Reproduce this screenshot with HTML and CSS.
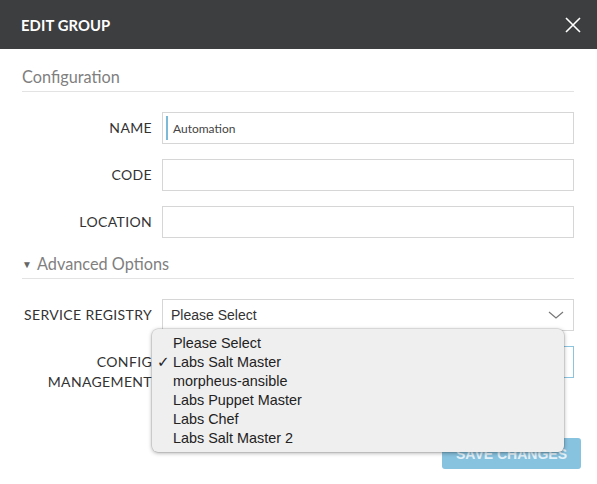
FILE: index.html
```html
<!DOCTYPE html>
<html>
<head>
<meta charset="utf-8">
<link rel="stylesheet" href="styles.css">
</head>
<body>
<div class="modal">
  <div class="modal-header">
    <span class="modal-title">EDIT GROUP</span>
    <svg class="close" width="16" height="16" viewBox="0 0 16 16"><path d="M1 1 L15 15 M15 1 L1 15" stroke="#fff" stroke-width="1.6" fill="none"/></svg>
  </div>
  <div class="modal-body">
    <div class="section-title">Configuration</div>
    <div class="form">
      <label class="lbl">NAME</label>
      <div class="field"><span class="caret"></span><span class="val">Automation</span></div>
      <label class="lbl">CODE</label>
      <div class="field"></div>
      <label class="lbl">LOCATION</label>
      <div class="field"></div>
    </div>
    <div class="section-title adv"><span class="tri">▼</span>Advanced Options</div>
    <div class="form">
      <label class="lbl">SERVICE REGISTRY</label>
      <div class="field select"><span class="sel-val">Please Select</span>
        <svg class="chev" width="16" height="8" viewBox="0 0 16 8"><path d="M1 1 L8 7 L15 1" stroke="#777" stroke-width="1.2" fill="none"/></svg>
      </div>
      <label class="lbl">CONFIG MANAGEMENT</label>
      <div class="field select focused"></div>
    </div>
  </div>
  <div class="modal-footer">
    <button class="btn">SAVE CHANGES</button>
  </div>
  <div class="dropdown">
    <div class="opt">Please Select</div>
    <div class="opt checked"><span class="check">✓</span>Labs Salt Master</div>
    <div class="opt">morpheus-ansible</div>
    <div class="opt">Labs Puppet Master</div>
    <div class="opt">Labs Chef</div>
    <div class="opt">Labs Salt Master 2</div>
  </div>
</div>
</body>
</html>
```
FILE: styles.css
```css
html, body { margin: 0; padding: 0; background: #fff; }
body { font-family: Lato, "Open Sans", sans-serif; color: #333; width: 597px; height: 484px; overflow: hidden; }
.modal { position: relative; width: 597px; height: 484px; }
.modal-header {
  height: 49px; background: #3d3e40; display: flex; align-items: center;
  justify-content: space-between; padding: 0 16px 0 21px; box-sizing: border-box;
}
.modal-title { color: #fff; font-weight: 700; font-size: 14.8px; letter-spacing: 0.1px; }
.close { margin-top: 1px; }
.modal-body { padding: 17px 23px 0 22px; }
.section-title {
  font-size: 16.3px; line-height: 20px; color: #7f7f7f; padding-top: 1px; padding-bottom: 4px;
  border-bottom: 1px solid #e3e3e3;
}
.section-title.adv { margin-top: 15px; }
.tri { font-size: 10px; display: inline-block; width: 15px; color: #666; vertical-align: 2px; }
.form {
  display: grid; grid-template-columns: 130px 1fr; column-gap: 10px; row-gap: 15px;
  margin-top: 20px;
}
.lbl { text-align: right; font-size: 14px; line-height: 20px; padding-top: 6px; color: #333; letter-spacing: 0.35px; }
.field {
  height: 32px; box-sizing: border-box; border: 1px solid #d6d6d6; background: #fff;
  display: flex; align-items: center; position: relative;
}
.caret { width: 2px; height: 24px; background: #7cbad8; margin-left: 3px; }
.val { font-size: 12px; color: #444; margin-left: 5px; }
.select { justify-content: space-between; }
.sel-val { font-family: "Liberation Sans", Arial, sans-serif; font-size: 14px; color: #333; margin-left: 8px; }
.chev { margin-right: 9px; }
.focused { border-color: #8cc4e0; }
.modal-footer { display: flex; justify-content: flex-end; padding: 46px 16px 0 0; }
.btn {
  width: 139px; height: 31px; border: none; border-radius: 3px; background: #87c2df;
  color: #e4f1f8; font-family: "Liberation Sans", Arial, sans-serif; font-weight: 700; font-size: 14px;
}
.dropdown {
  position: absolute; left: 152px; top: 329px; width: 412px; height: 123px; box-sizing: border-box;
  background: #efefef; border-radius: 6px; padding-top: 5px;
  box-shadow: 0 1px 4px rgba(0,0,0,0.35), 0 0 0 0.5px rgba(0,0,0,0.15);
  font-family: "Liberation Sans", Arial, sans-serif; font-size: 14.4px; color: #222;
}
.opt { height: 19px; line-height: 19px; padding-left: 21px; position: relative; }
.check { position: absolute; left: 5px; font-size: 15px; font-weight: 700; font-family: "DejaVu Sans", sans-serif; }
```
